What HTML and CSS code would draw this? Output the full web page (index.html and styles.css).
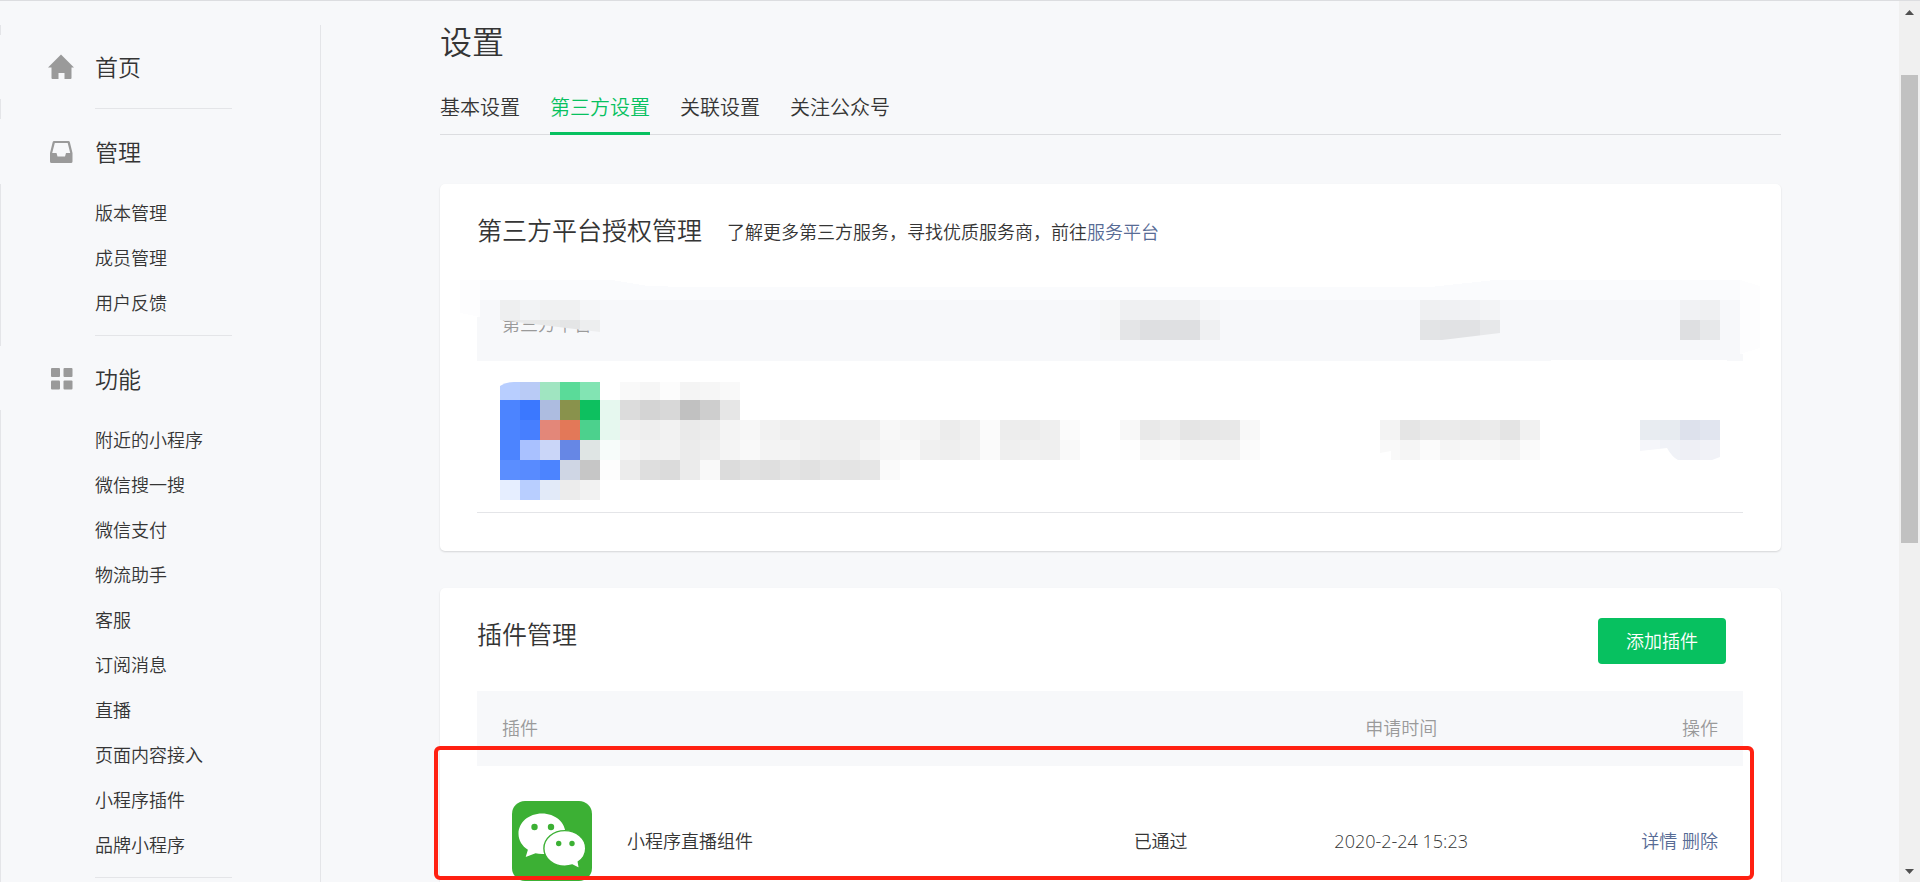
FILE: index.html
```html
<!DOCTYPE html>
<html lang="zh-CN">
<head>
<meta charset="utf-8">
<title>设置</title>
<link rel="stylesheet" href="styles.css">
</head>
<body>
<div class="shell">
  <nav class="sidebar" aria-label="主导航">
    <section class="group group-home">
      <h2 class="group-title">
        <svg class="group-icon" viewBox="0 0 26 26" aria-hidden="true"><path d="M13 .5 26 13.500h-2.500V24q0 1-1 1h-6v-6h-6v6h-6q-1 0-1-1V13.500H0z"/></svg>
        <a href="#home">首页</a>
      </h2>
    </section>
    <section class="group">
      <h2 class="group-title">
        <svg class="group-icon" viewBox="0 0 26 26" aria-hidden="true"><path fill-rule="evenodd" d="M6 2h14.500q1 0 1.300 1L24.500 14v8.500q0 1.500-1.500 1.500H3.500Q2 24 2 22.500V14L4.700 3Q5 2 6 2zm.8 2L4.200 14h4.300l1 3.500h7.500l1-3.500h4.200L19.700 4z"/></svg>
        <a href="#manage">管理</a>
      </h2>
      <ul class="menu">
        <li><a href="#version">版本管理</a></li>
        <li><a href="#member">成员管理</a></li>
        <li><a href="#feedback">用户反馈</a></li>
      </ul>
    </section>
    <section class="group">
      <h2 class="group-title">
        <svg class="group-icon" viewBox="0 0 26 26" aria-hidden="true"><rect x="3" y="2" width="9" height="9" rx="1"/><rect x="15.500" y="2" width="9" height="9" rx="1"/><rect x="3" y="14.500" width="9" height="9" rx="1"/><rect x="15.500" y="14.500" width="9" height="9" rx="1"/></svg>
        <a href="#features">功能</a>
      </h2>
      <ul class="menu">
        <li><a href="#nearby">附近的小程序</a></li>
        <li><a href="#search">微信搜一搜</a></li>
        <li><a href="#pay">微信支付</a></li>
        <li><a href="#logistics">物流助手</a></li>
        <li><a href="#service">客服</a></li>
        <li><a href="#subscribe">订阅消息</a></li>
        <li><a href="#live">直播</a></li>
        <li><a href="#pages">页面内容接入</a></li>
        <li><a href="#plugins">小程序插件</a></li>
        <li><a href="#brand">品牌小程序</a></li>
      </ul>
    </section>
  </nav>

  <main class="content">
    <h1 class="page-title">设置</h1>
    <nav class="tabs" aria-label="设置分类">
      <a class="tab" href="#basic">基本设置</a>
      <a class="tab tab-active" href="#third" aria-current="page">第三方设置</a>
      <a class="tab" href="#related">关联设置</a>
      <a class="tab" href="#follow">关注公众号</a>
    </nav>

    <section class="card">
      <header class="card-head">
        <h2 class="card-title">第三方平台授权管理</h2>
        <p class="card-note">了解更多第三方服务，寻找优质服务商，前往<a href="#platform">服务平台</a></p>
      </header>
      <table class="table">
        <thead>
          <tr><th class="col-name">第三方平台</th><th class="col-state"></th><th class="col-time"></th><th class="col-action"></th></tr>
        </thead>
        <tbody>
          <tr><td></td><td></td><td></td><td></td></tr>
        </tbody>
      </table>
      <svg class="mosaic" id="mosaic" viewBox="440 270 1341 290" preserveAspectRatio="none" shape-rendering="crispEdges" aria-hidden="true">
        <defs>
          <clipPath id="clip-platform"><path d="M500 300h100v32L500 320z"/></clipPath>
          <clipPath id="clip-time"><path d="M1420 300h80v33l-58 7h-22z"/></clipPath>
          <clipPath id="clip-logo"><path d="M500 386q6-4 14-4h226v20H500z"/></clipPath>
          <clipPath id="clip-date"><path d="M1380 420h160v40h-149v-9l-11 2z"/></clipPath>
          <clipPath id="clip-action"><path d="M1640 420h80v37l-8 3h-34q-6-3-11-12l-27 3z"/></clipPath>
        </defs>
        <path fill="#fff" d="M476 280h4v37h-4zM1740 280h4v74h-4zM1551 360h176v3h-176z"/>
        <path fill="#fdfdfe" d="M460 280h20v37l-20-4zM1740 280l20 6v62l-20 6z"/>
        <path fill="#fff" d="M480 284h1260v16H480z"/>
        <path fill="#fafbfd" d="M480 280h132l36 6 40 1h742l65-7h245v20H480z"/>
      </svg>
    </section>

    <section class="card card-plugins">
      <header class="card-head">
        <h2 class="card-title">插件管理</h2>
        <button class="add-button" type="button">添加插件</button>
      </header>
      <table class="table">
        <thead>
          <tr><th class="col-name">插件</th><th class="col-state"></th><th class="col-time">申请时间</th><th class="col-action">操作</th></tr>
        </thead>
        <tbody>
          <tr>
            <td>
              <div class="plugin">
                <svg class="plugin-logo" viewBox="0 0 80 80" aria-hidden="true">
                  <rect width="80" height="80" rx="13" fill="#3cb034"/>
                  <path fill="#fff" d="M30 12.500c13.200 0 23.500 8.900 23.500 20.200S43.200 53 30 53c-2.300 0-4.500-.2-6.500-.8L13.700 56l2.200-7.200C10.200 45.100 6.500 39.300 6.500 32.700 6.500 21.400 16.800 12.500 30 12.500z"/>
                  <circle cx="22.500" cy="26" r="3.200" fill="#3cb034"/><circle cx="39" cy="26" r="3.200" fill="#3cb034"/>
                  <path fill="#fff" stroke="#3cb034" stroke-width="1.400" d="M52.800 29.600c11.600 0 20.900 8 20.900 17.800 0 5.400-2.900 10.300-7.400 13.500l1.200 6.700-7.200-3.600c-2.300.7-4.800 1.100-7.500 1.100-11.600 0-20.900-7.900-20.900-17.700s9.300-17.800 20.900-17.800z"/>
                  <circle cx="46.700" cy="42.500" r="2.700" fill="#3cb034"/><circle cx="60" cy="42.500" r="2.700" fill="#3cb034"/>
                </svg>
                <span>小程序直播组件</span>
              </div>
            </td>
            <td class="col-state">已通过</td>
            <td class="col-time">2020-2-24 15:23</td>
            <td class="col-action"><a href="#detail">详情</a> <a href="#delete">删除</a></td>
          </tr>
        </tbody>
      </table>
      <div class="highlight"></div>
    </section>
  </main>

  <div class="scrollbar" aria-hidden="true">
    <svg class="arrow" viewBox="0 0 9 5"><path d="M4.500 0 9 5H0z"/></svg>
    <div class="track"><div class="thumb"></div></div>
    <svg class="arrow" viewBox="0 0 9 5"><path d="M0 0h9L4.500 5z"/></svg>
  </div>
</div>
<script src="mosaic.js"></script>
</body>
</html>
```

FILE: styles.css
```css
* {
  box-sizing: border-box;
}

body {
  margin: 0;
  background: #f7f8fa;
  color: #353535;
  font-family: "Open Sans", "Noto Sans CJK SC", sans-serif;
  font-size: 18px;
  font-weight: 350;
  line-height: 24px;
}

h1, h2, p, ul {
  margin: 0;
  padding: 0;
  font-weight: 350;
}

ul {
  list-style: none;
}

a {
  color: #576b95;
  text-decoration: none;
}

.shell {
  display: flex;
  height: 100vh;
  overflow: hidden;
  border-top: 1px solid #dcdde0;
}

/* Sidebar */
.sidebar {
  flex: 0 0 321px;
  margin-top: 24px;
  padding: 20px 88px 0 48px;
  border-right: 1px solid #e4e5e8;
  background: linear-gradient(#e4e5e8 0 10px, transparent 10px 74px, #e4e5e8 74px 94px, transparent 94px 159px, #e4e5e8 159px 321px, transparent 321px 385px, #e4e5e8 385px) left / 1px 100% no-repeat;
}

.sidebar a {
  color: #353535;
}

.group::after {
  content: "";
  display: block;
  height: 1px;
  margin: 9px 0 21px 47px;
  background: #e4e5e8;
}

.group-home::after {
  margin-top: 19px;
}

.group-title {
  display: flex;
  align-items: center;
  gap: 21px;
  font-size: 23px;
  line-height: 44px;
}

.group-icon {
  width: 26px;
  height: 26px;
  fill: #9a9a9a;
}

.menu {
  padding: 17px 0 0 47px;
  line-height: 45px;
}

.menu a {
  display: block;
}

/* Content */
.content {
  flex: 1;
  min-width: 0;
  padding: 17px 118px 0 119px;
}

.page-title {
  font-size: 32px;
  line-height: 48px;
}

.tabs {
  display: flex;
  gap: 30px;
  margin: 18px 0 49px;
  border-bottom: 1px solid #dcdde0;
  font-size: 20px;
  line-height: 48px;
}

.tab {
  margin-bottom: -1px;
  border-bottom: 3px solid transparent;
  color: #353535;
}

.tab-active {
  border-color: #07c160;
  color: #07c160;
}

.card {
  position: relative;
  margin-bottom: 37px;
  padding: 30px 38px 38px 37px;
  border-radius: 5px;
  background: #fff;
  box-shadow: 0 1px 2px rgba(0, 0, 0, 0.14);
}

.card-head {
  display: flex;
  align-items: flex-start;
  gap: 25px;
  height: 72px;
}

.card-plugins .card-head {
  justify-content: space-between;
  height: 73px;
  padding-right: 17px;
}

.card-title {
  font-size: 25px;
  line-height: 32px;
}

.card-note {
  line-height: 36px;
}

.add-button {
  width: 128px;
  height: 46px;
  border: 0;
  border-radius: 4px;
  background: #07c160;
  color: #fff;
  font: inherit;
}

.table {
  width: 100%;
  border-collapse: collapse;
  table-layout: fixed;
}

.table th {
  height: 75px;
  padding: 0 25px;
  background: #f7f8fa;
  color: #9a9a9a;
  font-weight: 350;
  text-align: left;
}

.table td {
  height: 151px;
  padding: 0 25px;
  border-bottom: 1px solid #e4e5e8;
}

.table th.col-name {
  width: 45%;
}

.table .col-state {
  width: 18%;
  text-align: center;
}

.table .col-time {
  width: 20%;
  text-align: center;
}

.table .col-action {
  text-align: right;
}

.plugin {
  display: flex;
  align-items: center;
  gap: 35px;
  padding-left: 10px;
}

.plugin-logo {
  width: 80px;
  height: 80px;
}

/* Pixelated cover over the private rows */
.mosaic {
  position: absolute;
  top: 86px;
  left: 0;
  width: 100%;
  height: 290px;
}

/* Marker frame round the plugin row */
.highlight {
  position: absolute;
  top: 158px;
  right: 27px;
  left: -6px;
  height: 134px;
  border: 4px solid #ff2011;
  border-radius: 6px;
}

/* Scrollbar */
.scrollbar {
  display: flex;
  flex: 0 0 21px;
  flex-direction: column;
  align-items: center;
  padding: 9px 0 8px;
  background: #f0f0f0;
}

.arrow {
  width: 9px;
  height: 5px;
  fill: #505050;
}

.track {
  flex: 1;
  width: 17px;
  padding-top: 60px;
}

.thumb {
  height: 59%;
  background: #c1c1c1;
}
```

FILE: mosaic.js
```js
// Each strip: left, top, height, cell colours (20px wide, "-" leaves a cell empty), clip id
const strips = [
  [500, 300, 20, "eeeff0 f2f3f5 f0f1f2 f0f1f2 f5f6f8", "clip-platform"],
  [500, 320, 20, "e5e6e7 e8e9ea e8e9e9 e4e5e6 edeeef", "clip-platform"],
  [1100, 300, 20, "f6f7f8 eff0f2 eff0f2 eff0f2 eff0f2 f5f6f8"],
  [1100, 320, 20, "f5f6f7 e4e5e7 dedfe1 dfe0e2 dedfe1 eff0f2"],
  [1420, 300, 20, "eff0f2 f0f1f3 f1f2f4 f3f4f6", "clip-time"],
  [1420, 320, 20, "e3e4e6 e1e2e4 e1e2e4 e7e8ea", "clip-time"],
  [1680, 300, 20, "f1f2f4 eff0f2"],
  [1680, 320, 20, "dedfe1 e7e8ea"],
  [500, 382, 18, "b8ceff b9cbf6 a0e5c1 5adb99 82e4b3 - f9f9f9 f6f6f6 fcfcfc f4f4f4 f6f6f6 f9f9f9", "clip-logo"],
  [500, 400, 20, "4c84ff 3b78ff adbce0 89924c 0dc05f e6f8ef dcdcdc d4d4d4 d8d8d8 c1c1c1 cecece e6e6e6"],
  [500, 420, 20, "4c84ff 477fff e38779 e37858 4cd18d e6f8ef f0f0f0 eeeeee f2f2f2 eaeaea ececec f4f4f4 f7f7f7 f2f2f2 eeeeee f0f0f0 efefef efefef efefef f8f8f8 f4f4f4 f3f3f3 ececec f0f0f0 fbfbfb ededed ececec efefef fbfbfb"],
  [500, 440, 20, "4c84ff a9c1ff cad6f8 6687e5 dfe5e4 f7fcfa f4f4f4 f1f1f1 f2f2f2 ebebeb eeeeee f4f4f4 f9f9f9 f3f3f3 f3f3f3 f0f0f0 eeeeee eeeeee f3f3f3 f6f6f6 f8f8f8 f0f0f0 eeeeee f1f1f1 fafafa efefef f1f1f1 efefef f9f9f9"],
  [500, 460, 20, "5b8eff 588bff 4c84ff cfd6e4 c6c6c6 fdfdfd ececec dedede dbdbdb ebebeb f9f9f9 dcdcdc e1e1e1 dfdfdf e4e4e4 e1e1e1 e6e6e6 e4e4e4 e6e6e6 fafafa"],
  [500, 480, 20, "e6eeff b8ceff e2eaf8 ececec f2f2f2"],
  [1120, 420, 20, "f8f8f8 e9e9e9 ededed e5e5e5 e7e7e7 e8e8e8 f8f8f8"],
  [1120, 440, 20, "fefefe f7f7f7 f9f9f9 f4f4f4 f4f4f4 f3f3f3 fbfbfb"],
  [1380, 420, 20, "f3f3f3 e5e5e5 eaeaea ebebeb e9e9e9 ebebeb e4e4e4 f1f1f1", "clip-date"],
  [1380, 440, 20, "f9f9f9 f5f5f5 fbfbfb f5f5f5 f8f8f8 f7f7f7 f3f3f3 fafafa", "clip-date"],
  [1640, 420, 20, "e8ecf1 e7ebf0 dde1ec e1e5ef", "clip-action"],
  [1640, 440, 20, "f5f6fa f0f2f7 eeeff5 f1f2f7", "clip-action"]
];

const ns = "http://www.w3.org/2000/svg";
const mosaic = document.getElementById("mosaic");

for (const [left, top, height, colours, clip] of strips) {
  const strip = document.createElementNS(ns, "g");
  if (clip) strip.setAttribute("clip-path", `url(#${clip})`);
  colours.split(" ").forEach((colour, i) => {
    if (colour === "-") return;
    const cell = document.createElementNS(ns, "rect");
    cell.setAttribute("x", left + i * 20);
    cell.setAttribute("y", top);
    cell.setAttribute("width", 20);
    cell.setAttribute("height", height);
    cell.setAttribute("fill", "#" + colour);
    strip.append(cell);
  });
  mosaic.append(strip);
}
```
